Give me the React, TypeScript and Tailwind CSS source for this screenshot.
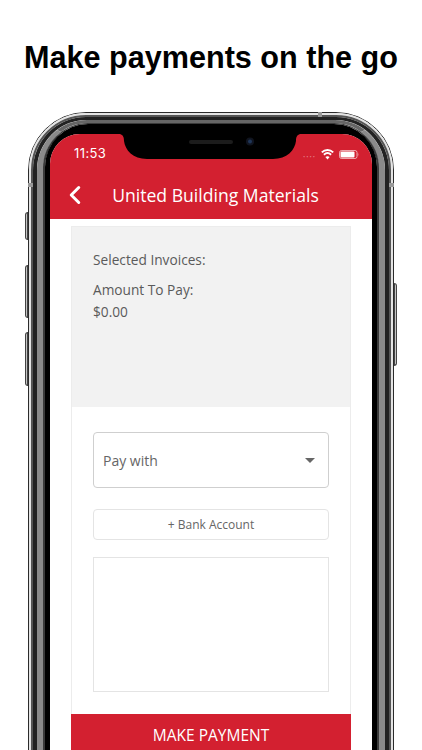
import { ChevronLeft } from 'lucide-react';

function Notch() {
  return (
    <svg className="absolute left-[70px] top-0" width="180" height="26" viewBox="0 0 180 26">
      <path d="M0 0 H180 C177 1 176 3 176 7 C175 16 167 25 153 25 H27 C13 25 5 16 4 7 C4 3 3 1 0 0 Z" fill="#000" />
      <rect x="69" y="6" width="44" height="4" rx="2" fill="#1c1c1c" />
      <circle cx="130" cy="7.5" r="4" fill="#10141f" />
      <circle cx="130" cy="7.5" r="2" fill="#1f3557" />
    </svg>
  );
}

function StatusBar() {
  return (
    <div className="flex h-[40px] items-start justify-between pl-[24px] pr-[13px] text-white">
      <span className="mt-[9px] text-[13px] leading-[20px] tracking-[0.4px] font-['Inter',sans-serif]">11:53</span>
      <div className="mt-[14px] flex items-center gap-[5px]">
        <span className="mt-[6px] text-[6px] leading-[6px] tracking-[1px] text-white/40">••••</span>
        <svg width="13" height="11" viewBox="0 0 13 11" fill="none" stroke="#fff">
          <path d="M0.8 3.4 C4 0.2 9 0.2 12.2 3.4" strokeWidth="1.9" />
          <path d="M2.9 5.7 C5 3.8 8 3.8 10.1 5.7" strokeWidth="1.9" />
          <path d="M6.5 10.6 L4.4 8 C5.5 7 7.5 7 8.6 8 Z" fill="#fff" stroke="none" />
        </svg>
        <svg width="20" height="9" viewBox="0 0 20 9">
          <rect x="0.5" y="0.5" width="17.5" height="8" rx="2" fill="none" stroke="#fff" strokeOpacity="0.6" />
          <rect x="1.5" y="1.5" width="14" height="6" rx="1" fill="#fff" />
          <path d="M18.8 3 C19.6 3.4 19.6 5.6 18.8 6 Z" fill="#fff" fillOpacity="0.6" />
        </svg>
      </div>
    </div>
  );
}

export default function App() {
  return (
    <div className="relative h-[750px] w-[422px] overflow-hidden bg-white">
      <h1 className="flex h-[112px] items-center justify-center pt-[4px] text-[30.6px] font-bold text-black font-['Liberation_Sans',sans-serif]">
        Make payments on the go
      </h1>

      <div className="relative ml-[28px] w-[366px]">
        {/* side buttons */}
        <div className="absolute left-[-3px] top-[100px] h-[28px] w-[3px] rounded-l-sm border border-[#444] bg-[#c4c4c4]" />
        <div className="absolute left-[-3px] top-[153px] h-[53px] w-[3px] rounded-l-sm border border-[#444] bg-[#c4c4c4]" />
        <div className="absolute left-[-3px] top-[220px] h-[54px] w-[3px] rounded-l-sm border border-[#444] bg-[#c4c4c4]" />
        <div className="absolute right-[-3px] top-[171px] h-[83px] w-[3px] rounded-r-sm border border-[#444] bg-[#c4c4c4]" />
        {/* antenna bands */}
        <div className="absolute left-[290px] top-0 z-10 h-[5px] w-[4px] bg-[#9a9a9a]" />
        <div className="absolute left-0 top-[71px] z-10 h-[4px] w-[5px] bg-[#9a9a9a]" />
        <div className="absolute right-0 top-[71px] z-10 h-[4px] w-[5px] bg-[#9a9a9a]" />

        {/* phone bezel rings */}
        <div className="h-[720px] rounded-[58px] border border-[#2b2b2b]">
          <div className="h-full rounded-[57px] border-[2px] border-[#e4e4e4]">
            <div className="h-full rounded-[55px] border-[2px] border-[#555]">
              <div className="h-full rounded-[53px] border-x-[4px] border-t-[3px] border-[#222]">
                <div className="h-full rounded-[50px] border-x-[6px] border-t-[3px] border-x-[#8a8a8a] border-t-[#666]">
                  <div className="h-full rounded-[45px] border-x-[2px] border-t-[1px] border-[#3a3a3a]">
                    <div className="h-full rounded-[43px] bg-black px-[5px] pt-[10px]">
                      {/* screen */}
                      <div className="relative flex h-full flex-col overflow-hidden rounded-t-[30px] bg-white font-['Open_Sans',sans-serif]">
                        <Notch />
                        <div className="h-[85px] shrink-0 bg-[#d32030]">
                          <StatusBar />
                          <div className="relative flex h-[45px] items-center justify-center pb-[3px] text-white">
                            <ChevronLeft className="absolute left-[10px] top-[6px]" size={30} strokeWidth={2.4} />
                            <span className="pl-[9px] text-[17.6px] leading-[24px]">United Building Materials</span>
                          </div>
                        </div>

                        <div className="mx-[21px] mt-[7px] flex flex-1 flex-col border-x border-t border-[#ececec]">
                          <div className="h-[180px] bg-[#f2f2f2] px-[21px] pt-[22px] text-[13.7px] leading-[22px] text-[#5a5a5a]">
                            <p>Selected Invoices:</p>
                            <p className="mt-[8px]">Amount To Pay:</p>
                            <p>$0.00</p>
                          </div>

                          <div className="flex flex-col px-[21px] pt-[25px]">
                            <div className="flex h-[56px] items-center justify-between rounded-[4px] border border-[#cfcfcf] pl-[9px] pr-[13px] text-[14px] text-[#666]">
                              <span>Pay with</span>
                              <span className="h-0 w-0 border-x-[5px] border-t-[5px] border-x-transparent border-t-[#666]" />
                            </div>
                            <div className="mt-[21px] flex h-[31px] items-center justify-center rounded-[4px] border border-[#e4e4e4] text-[12px] text-[#666]">
                              + Bank Account
                            </div>
                            <div className="mt-[17px] h-[135px] border border-[#e4e4e4]" />
                          </div>

                          <div className="mx-[-1px] mt-[22px] flex h-[60px] justify-center bg-[#d32030] pt-[10px] text-[15.5px] leading-[22px] text-white">
                            MAKE PAYMENT
                          </div>
                        </div>
                      </div>
                    </div>
                  </div>
                </div>
              </div>
            </div>
          </div>
        </div>
      </div>
    </div>
  );
}
